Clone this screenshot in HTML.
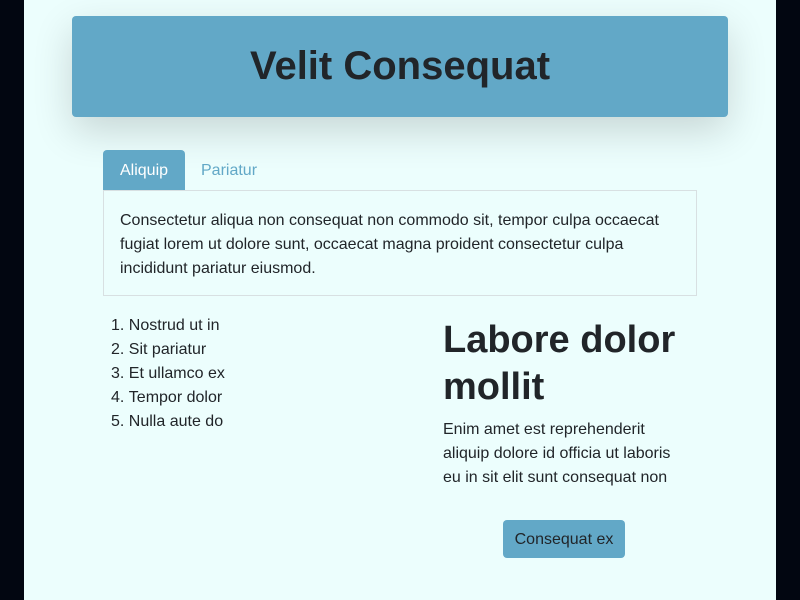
<!DOCTYPE html>
<html><head><meta charset="utf-8"><style>
*{box-sizing:border-box;margin:0;padding:0}
body{width:800px;height:600px;background:#020611;font-family:"Liberation Sans",sans-serif;color:#212529;overflow:hidden}
.main{position:absolute;left:24px;top:0;width:752px;height:600px;background:#ecfefd}
.hdr{position:absolute;left:48px;top:16px;width:656px;height:101px;background:#62a8c7;border-radius:4px;box-shadow:0 14px 40px rgba(0,0,0,.16);text-align:center;font-size:40px;font-weight:bold;line-height:101px;color:#212529}
.tab{position:absolute;top:150px;height:40px;line-height:42px;font-size:16px}
.t1{left:79px;width:82px;background:#62a8c7;color:#fff;border-radius:4px 4px 0 0;text-align:center}
.t2{left:177px;color:#62a8c7}
.panel{position:absolute;left:79px;top:190px;width:594px;height:106px;border:1px solid #d8e0e2;padding:18px 16px;font-size:16px;line-height:24px}
ol{position:absolute;left:87px;top:314px;list-style-position:inside;font-size:16px;line-height:24px}
h2{position:absolute;left:419px;top:317px;font-size:38px;line-height:47px;font-weight:bold;width:260px}
p.d{position:absolute;left:419px;top:418px;width:240px;font-size:16px;line-height:24px}
.btn{position:absolute;left:479px;top:520px;width:122px;height:38px;background:#62a8c7;border-radius:4px;text-align:center;line-height:40px;font-size:16px}
</style></head><body><div class="main">
<div class="hdr">Velit Consequat</div>
<div class="tab t1">Aliquip</div><div class="tab t2">Pariatur</div>
<div class="panel">Consectetur aliqua non consequat non commodo sit, tempor culpa occaecat fugiat lorem ut dolore sunt, occaecat magna proident consectetur culpa incididunt pariatur eiusmod.</div>
<ol><li>Nostrud ut in</li><li>Sit pariatur</li><li>Et ullamco ex</li><li>Tempor dolor</li><li>Nulla aute do</li></ol>
<h2>Labore dolor mollit</h2>
<p class="d">Enim amet est reprehenderit aliquip dolore id officia ut laboris eu in sit elit sunt consequat non</p>
<div class="btn">Consequat ex</div>
</div></body></html>
